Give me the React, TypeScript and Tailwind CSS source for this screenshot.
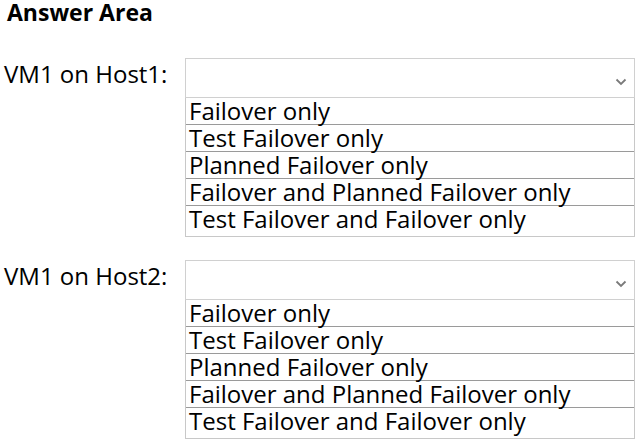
import React from 'react';

const options = [
  'Failover only',
  'Test Failover only',
  'Planned Failover only',
  'Failover and Planned Failover only',
  'Test Failover and Failover only',
];

const Chevron = () => (
  <svg width="12" height="8" viewBox="0 0 12 8" className="text-[#7a7a7a]">
    <path d="M1.5 1.5 L6 6 L10.5 1.5" fill="none" stroke="currentColor" strokeWidth="1.8" />
  </svg>
);

const Question = ({ label }: { label: string }) => (
  <div className="flex">
    <div className="w-[185px] shrink-0 pl-[4px] pt-[1px] text-[24px] leading-[30px] text-black">{label}</div>
    <div className="w-[450px]">
      {/* Select */}
      <div className="h-[40px] border border-[#d0d0d0] flex items-center justify-end pr-[7px] pt-[8px]">
        <Chevron />
      </div>
      {/* Options */}
      <div className="border-x border-b border-[#c8c8c8]">
        {options.map((o, i) => (
          <div
            key={o}
            className={
              'pl-[3px] text-[24px] leading-[26px] text-black whitespace-nowrap ' +
              (i === options.length - 1 ? 'h-[30px]' : 'h-[27px] border-b border-[#9a9a9a]')
            }
          >
            {o}
          </div>
        ))}
      </div>
    </div>
  </div>
);

export default function App() {
  return (
    <div className="w-[642px] h-[445px] bg-white overflow-hidden" style={{ fontFamily: '"Open Sans", "Noto Sans", sans-serif' }}>
      <div className="pl-[7px] pt-[1px] text-[23px] leading-[22px] font-bold text-black">Answer Area</div>
      <div className="mt-[35px]">
        <Question label="VM1 on Host1:" />
      </div>
      <div className="mt-[23px]">
        <Question label="VM1 on Host2:" />
      </div>
    </div>
  );
}
